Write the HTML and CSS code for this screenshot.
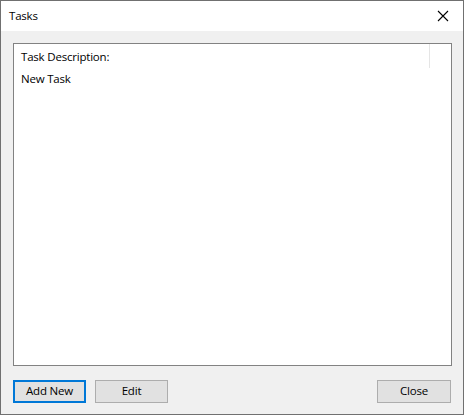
FILE: index.html
```html
<!DOCTYPE html>
<html>
<head>
<meta charset="utf-8">
<link rel="stylesheet" href="styles.css">
</head>
<body>
<div class="window">
  <div class="titlebar">
    <span class="title">Tasks</span>
    <span class="close-x">
      <svg width="12" height="12" viewBox="0 0 12 12"><path d="M1 1 L11 11 M11 1 L1 11" stroke="#000" stroke-width="1.1" fill="none"/></svg>
    </span>
  </div>
  <div class="client">
    <div class="listview">
      <div class="header">
        <span class="col">Task Description:</span>
        <span class="sep"></span>
      </div>
      <div class="row">New Task</div>
    </div>
    <div class="buttons">
      <button class="btn default">Add New</button>
      <button class="btn">Edit</button>
      <span class="spacer"></span>
      <button class="btn close">Close</button>
    </div>
  </div>
</div>
</body>
</html>
```
FILE: styles.css
```css
html, body {
  margin: 0;
  padding: 0;
  background: #f0f0f0;
}
body {
  font-family: "Open Sans", "Noto Sans", sans-serif;
  font-size: 11.5px;
  letter-spacing: -0.2px;
  color: #000;
}
.window {
  width: 464px;
  height: 415px;
  box-sizing: border-box;
  border: 1px solid #707070;
  display: flex;
  flex-direction: column;
  background: #f0f0f0;
}
.titlebar {
  height: 30px;
  background: #fff;
  display: flex;
  align-items: center;
  padding-left: 8px;
  flex: none;
}
.title {
  flex: 1;
  padding-bottom: 2px;
}
.close-x {
  width: 46px;
  height: 30px;
  display: flex;
  align-items: center;
  justify-content: center;
  margin-right: -3px;
}
.close-x svg { display: block; }
.client {
  flex: 1;
  display: flex;
  flex-direction: column;
  padding: 12px 11px 12px 12px;
}
.listview {
  flex: none;
  height: 323px;
  box-sizing: border-box;
  border: 1px solid #828282;
  background: #fff;
  padding: 0 0 0 7px;
}
.header {
  height: 24px;
  display: flex;
  align-items: center;
}
.col {
  flex: 1;
  padding-top: 1px;
}
.sep {
  width: 1px;
  height: 24px;
  background: #e5e5e5;
  margin-right: 21px;
}
.row {
  height: 20px;
  line-height: 20px;
  margin-top: 1px;
}
.buttons {
  display: flex;
  margin-top: 14px;
  gap: 9px;
}
.spacer { flex: 1; }
.btn {
  width: 73px;
  height: 23px;
  box-sizing: border-box;
  border: 1px solid #adadad;
  background: #e1e1e1;
  font-family: inherit;
  font-size: 11.5px;
  letter-spacing: -0.2px;
  color: #000;
  padding: 0 0 2px 0;
  margin: 0;
}
.btn.close {
  width: 74px;
  margin-right: 1px;
}
.btn.default {
  border: 2px solid #0078d7;
}
```
